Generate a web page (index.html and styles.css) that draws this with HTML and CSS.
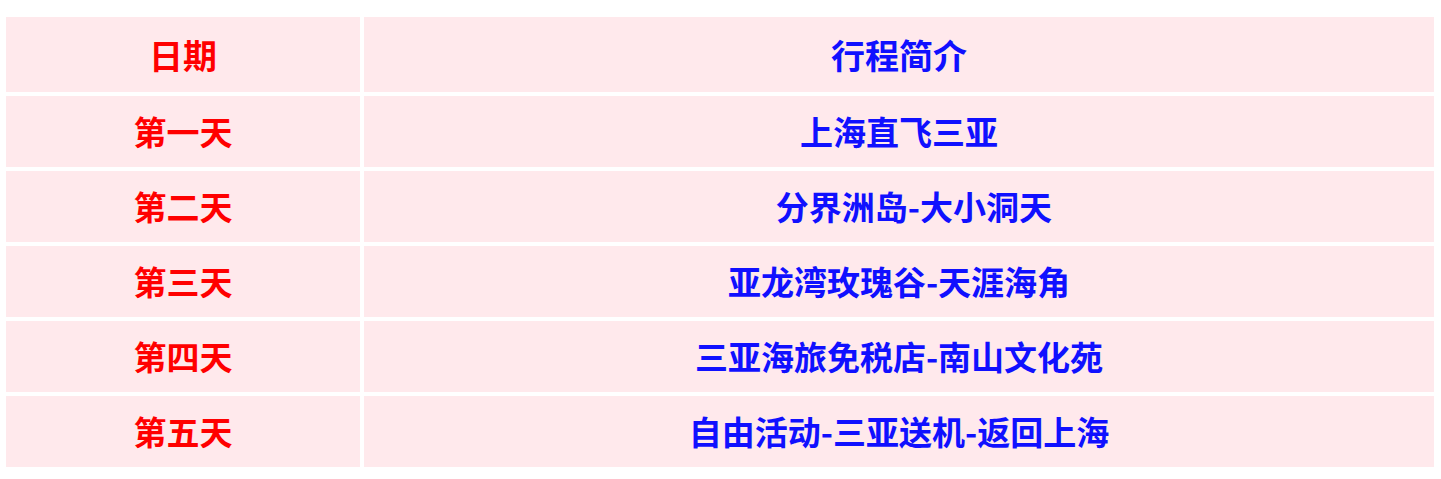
FILE: index.html
```html
<!DOCTYPE html>
<html lang="zh">
<head>
<meta charset="utf-8">
<title>行程</title>
<link rel="stylesheet" href="styles.css">
</head>
<body>
<table class="plan">
  <thead>
    <tr class="head-row"><th class="c-date">日期</th><th class="c-desc">行程简介</th></tr>
  </thead>
  <tbody>
    <tr><td class="c-date">第一天</td><td class="c-desc">上海直飞三亚</td></tr>
    <tr><td class="c-date">第二天</td><td class="c-desc">&nbsp;&nbsp;&nbsp;&nbsp;分界洲岛-大小洞天</td></tr>
    <tr><td class="c-date">第三天</td><td class="c-desc">亚龙湾玫瑰谷-天涯海角</td></tr>
    <tr><td class="c-date">第四天</td><td class="c-desc">三亚海旅免税店-南山文化苑</td></tr>
    <tr><td class="c-date">第五天</td><td class="c-desc">自由活动-三亚送机-返回上海</td></tr>
  </tbody>
</table>
</body>
</html>
```
FILE: styles.css
```css
html, body { margin: 0; padding: 0; background: #ffffff; }
body { font-family: "Noto Sans CJK SC", "Noto Sans", sans-serif; }
.plan {
  border-collapse: separate;
  border-spacing: 4px;
  width: 1436px;
  margin: 13px 0 0 2px;
  table-layout: fixed;
}
.plan th, .plan td {
  background: #ffe9ec;
  padding: 0;
  text-align: center;
  vertical-align: middle;
  font-weight: 700;
  font-size: 33px;
  line-height: 1;
  height: 71px;
}
.plan .head-row th { height: 75px; font-size: 34px; }
.c-date { width: 354px; color: #ff0000; }
.c-desc { color: #1010ff; }
```
